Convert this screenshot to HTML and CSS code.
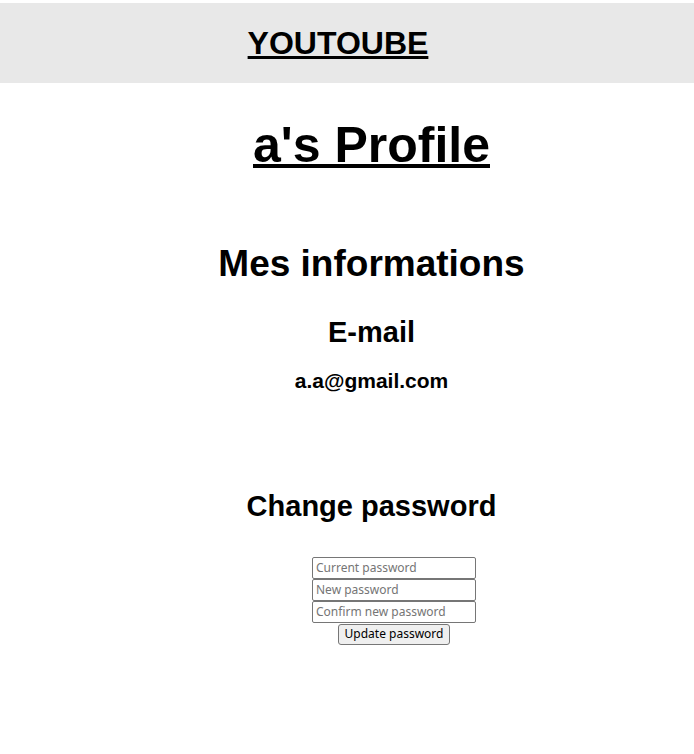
FILE: index.html
```html
<!DOCTYPE html>
<html lang="fr">
<head>
<meta charset="utf-8">
<title>a's Profile</title>
<link rel="stylesheet" href="styles.css">
</head>
<body>
<header class="topbar">
  <a class="brand" href="#">YOUTOUBE</a>
</header>
<main class="content">
  <h1 class="profile-title">a's Profile</h1>
  <h2 class="section-title">Mes informations</h2>
  <h3 class="field-label">E-mail</h3>
  <p class="field-value">a.a@gmail.com</p>
  <h3 class="pw-title">Change password</h3>
  <form class="pw-form">
    <input class="pw-input" type="password" placeholder="Current password">
    <input class="pw-input" type="password" placeholder="New password">
    <input class="pw-input" type="password" placeholder="Confirm new password">
    <button class="pw-button" type="button">Update password</button>
  </form>
</main>
</body>
</html>
```
FILE: styles.css
```css
html, body {
  margin: 0;
  padding: 0;
  background: #ffffff;
}
body {
  font-family: "Liberation Sans", Arial, sans-serif;
  color: #000000;
  padding-top: 3px;
}
.topbar {
  height: 80px;
  background: #e8e8e8;
  display: flex;
  align-items: center;
  justify-content: center;
  padding-right: 18px;
}
.brand {
  font-size: 32px;
  font-weight: bold;
  line-height: 1.15;
  color: #000000;
  text-decoration: underline;
  text-decoration-thickness: 3px;
}
.content {
  margin-left: 49px;
  display: flex;
  flex-direction: column;
  align-items: center;
  text-align: center;
}
.profile-title {
  margin: 34px 0 0;
  font-size: 50px;
  line-height: 1.15;
  font-weight: bold;
  text-decoration: underline;
  text-decoration-thickness: 4px;
}
.section-title {
  margin: 68px 0 0;
  font-size: 37px;
  line-height: 1.15;
  font-weight: bold;
}
.field-label {
  margin: 31px 0 0;
  font-size: 29px;
  line-height: 1.15;
  font-weight: bold;
}
.field-value {
  margin: 20px 0 0;
  font-size: 21px;
  line-height: 1.15;
  font-weight: bold;
}
.pw-title {
  margin: 96px 0 0;
  font-size: 29px;
  line-height: 1.15;
  font-weight: bold;
}
.pw-form {
  margin: 34px 0 0 45px;
  display: flex;
  flex-direction: column;
  align-items: center;
}
.pw-input {
  box-sizing: border-box;
  width: 164px;
  height: 22px;
  margin: 0;
  padding: 1px 3px;
  border: 1px solid #767676;
  border-radius: 2px;
  font-family: "Noto Sans", "DejaVu Sans", sans-serif;
  font-size: 12px;
  background: #ffffff;
}
.pw-input::placeholder {
  color: #757575;
}
.pw-button {
  box-sizing: border-box;
  height: 21px;
  margin: 1px 0 0;
  padding: 0 6px;
  border: 1px solid #767676;
  border-radius: 3px;
  background: #efefef;
  font-family: "Noto Sans", "DejaVu Sans", sans-serif;
  font-size: 12px;
  color: #000000;
  line-height: 1;
}
```
